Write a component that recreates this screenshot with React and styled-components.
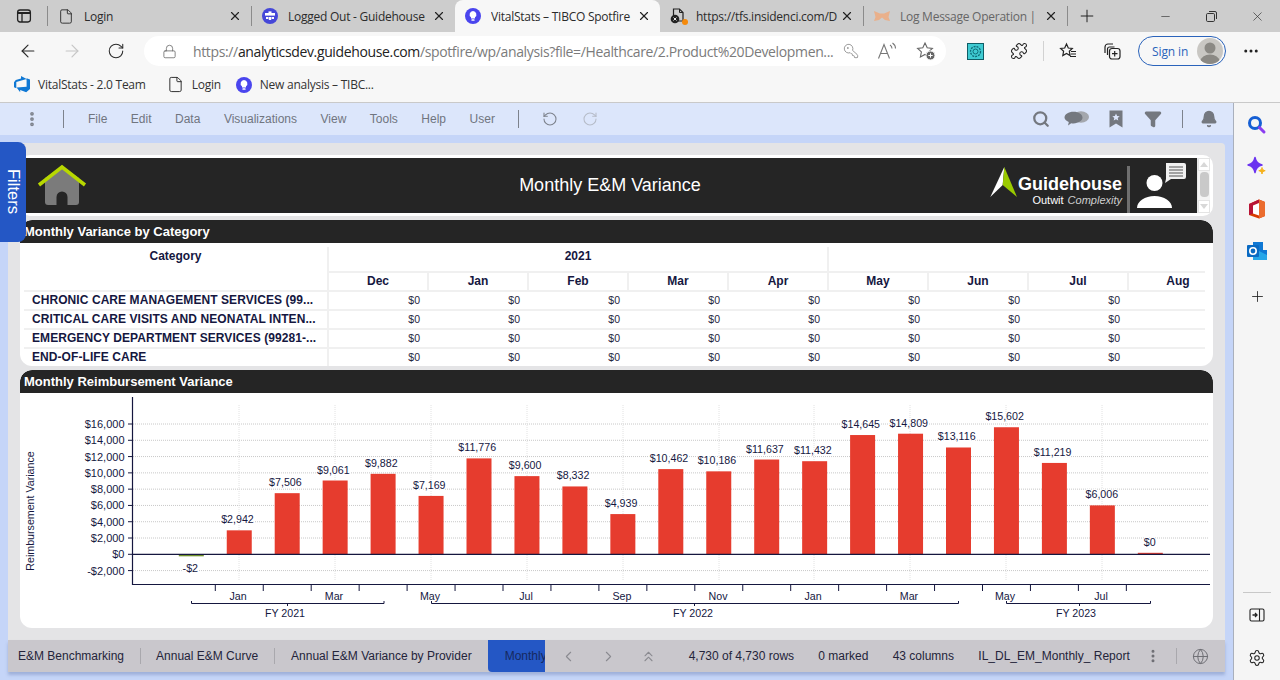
import React from 'react';
import styled, { createGlobalStyle } from 'styled-components';
import { ArrowLeft, ArrowRight, RotateCw, RotateCcw, Lock, KeyRound, Puzzle, Plus, X, Minus, Globe, ChevronLeft, ChevronRight, ChevronsUp, Settings, Search, Filter, Bell, EllipsisVertical, Ellipsis, File } from 'lucide-react';

const Global = createGlobalStyle`
  html, body { margin: 0; padding: 0; width: 1280px; height: 680px; overflow: hidden; background: #f7f7f7; }
  * { box-sizing: border-box; }
`;

const UI = `"Open Sans", "Noto Sans", sans-serif`;
const AR = `"Liberation Sans", Arial, sans-serif`;

const Page = styled.div`
  width: 1280px; height: 680px; display: flex; flex-direction: column; font-family: ${UI}; color: #333; overflow: hidden;
`;

/* ---------- tab strip ---------- */
const TabStrip = styled.div`
  height: 32px; flex: none; background: #cdcdcd; display: flex; align-items: stretch;
`;
const TabMenuBtn = styled.div`
  width: 47px; display: flex; align-items: center; justify-content: center; padding-left: 1px;
`;
const TabSep = styled.div`
  width: 1px; height: 20px; align-self: center; background: #8b8b8b; flex: none;
`;
const Tab = styled.div`
  width: ${p => p.$w}px; flex: none; display: flex; align-items: center; padding-left: 10px; padding-right: 8px;
  background: ${p => p.$active ? '#f7f7f7' : 'transparent'};
  border-radius: ${p => p.$active ? '8px 8px 0 0' : '0'};
`;
const TabIcon = styled.span`
  width: 16px; height: 16px; flex: none; display: flex; align-items: center; justify-content: center; position: relative;
`;
const TabLabel = styled.span`
  flex: 1; margin-left: 10px; font-size: 12px; white-space: nowrap; overflow: hidden; color: ${p => p.$dim ? '#666' : '#2b2b2b'};
  letter-spacing: -0.25px;
`;
const TabClose = styled.span`
  width: 16px; flex: none; display: flex; align-items: center; justify-content: center; color: #222;
`;
const NewTab = styled.div`
  width: 38px; display: flex; align-items: center; justify-content: center; color: #222;
`;
const WinControls = styled.div`
  margin-left: auto; display: flex; align-items: center; color: #333;
`;
const WinBtn = styled.div`
  width: 46px; display: flex; align-items: center; justify-content: center;
`;
const OrangeDot = styled.span`
  position: absolute; right: -2px; bottom: -1px; width: 6px; height: 6px; border-radius: 50%; background: #f58a0b;
`;

/* ---------- address bar ---------- */
const Toolbar = styled.div`
  height: 36px; flex: none; display: flex; align-items: flex-end; padding: 0 0 2px 16px; background: #f7f7f7;
`;
const NavBtn = styled.div`
  width: 24px; height: 30px; margin-right: 20px; display: flex; align-items: center; justify-content: center; color: ${p => p.$off ? '#c6c6c6' : '#2b2b2b'};
`;
const Omnibox = styled.div`
  width: 802px; height: 30px; margin-left: -4px; background: #fff; border-radius: 15px; display: flex; align-items: center; padding-left: 18px; color: #5f5f5f;
`;
const UrlText = styled.span`
  margin-left: 16px; width: 645px; font-size: 14px; white-space: nowrap; color: #7b7b7b; letter-spacing: -0.36px;
  b { font-weight: 400; color: #222; }
`;
const OmniTools = styled.div`
  margin-left: 5px; display: flex; align-items: center; gap: 18px; color: #777;
`;
const ToolIcons = styled.div`
  display: flex; height: 30px; align-items: center; margin-left: 19px; color: #222;
`;
const ToolBtn = styled.div`
  width: ${p => p.$w ?? 44}px; margin-left: ${p => p.$ml ?? 0}px; display: flex; justify-content: center; align-items: center;
`;
const ToolSep = styled.div`
  width: 1px; height: 20px; background: #d2d2d2;
`;
const SignIn = styled.div`
  width: 88px; height: 30px; margin-left: 6px; border: 1.5px solid #2a63bb; border-radius: 15px; display: flex; align-items: center; justify-content: space-between; padding: 0 2px 0 13px; color: #2a63bb; font-size: 12px; letter-spacing: -0.1px;
`;
const Avatar = styled.span`
  width: 26px; height: 26px; border-radius: 50%; background: #c9c7c3; overflow: hidden; display: flex;
`;
const MoreBtn = styled.div`
  width: 50px; height: 30px; display: flex; align-items: center; justify-content: center; color: #222;
`;

/* ---------- bookmarks ---------- */
const Bookmarks = styled.div`
  height: 35px; flex: none; display: flex; align-items: center; padding: 0 0 1px 14px; background: #f7f7f7; border-bottom: 1px solid #c9c9c9;
`;
const Bookmark = styled.div`
  display: flex; align-items: center; gap: 8px; margin-right: ${p => p.$mr}px; font-size: 12px; color: #333; white-space: nowrap; letter-spacing: -0.25px;
`;

/* ---------- app area ---------- */
const Body = styled.div`
  flex: 1; display: flex; min-height: 0;
`;
const Main = styled.div`
  flex: 1; min-width: 0; display: flex; flex-direction: column; background: #c5d5f8; border-right: 1px solid #a9b0bd;
`;
const MenuBar = styled.div`
  height: 32px; flex: none; background: #dce6fb; display: flex; align-items: center; color: #70757f; font-family: ${AR}; font-size: 12px;
`;
const Kebab = styled.div`
  width: 64px; display: flex; align-items: center; justify-content: center; border-right: 1px solid #7d828c; height: 18px; color: #7d828c;
`;
const MenuItems = styled.div`
  display: flex; gap: 23.5px; margin-left: 24px; width: 431px; height: 18px; align-items: center; border-right: 1px solid #7d828c;
`;
const UndoGroup = styled.div`
  display: flex; gap: 24px; margin-left: 23px;
`;
const RightTools = styled.div`
  margin-left: auto; display: flex; align-items: center; padding-right: 15px; color: #74787f;
`;
const RightTool = styled.span`
  width: ${p => p.$w}px; flex: none; display: flex; justify-content: center; align-items: center;
`;
const RightSep = styled.span`
  width: 1px; height: 18px; background: #7d828c; margin: 0 17px 0 5px;
`;
const Workspace = styled.div`
  flex: 1; min-height: 0; margin: 8px 8px 0; display: flex; flex-direction: column; position: relative; font-family: ${AR};
`;
const Panel = styled.div`
  flex: 1; background: #e4e4e6; border-radius: 4px 4px 0 0; padding: 12px 12px 12px; display: flex; flex-direction: column; gap: 4px; min-height: 0;
`;
const FiltersTab = styled.div`
  position: absolute; left: -8px; top: -1px; width: 26px; height: 100px; background: #2457c5; color: #fff; border-radius: 0 8px 8px 0;
  display: flex; align-items: center; justify-content: center; font-size: 16.5px; writing-mode: vertical-rl; padding-bottom: 2px;
`;
const BannerCard = styled.div`
  height: 61px; flex: none; background: #fff; border-radius: 10px; padding: 3px; display: flex;
`;
const Banner = styled.div`
  flex: 1; background: #252525; display: grid; grid-template-columns: 1fr auto 1fr; align-items: center;
`;
const HomeIcon = styled.svg`
  margin-left: 14px; display: block;
`;
const BannerTitle = styled.div`
  color: #fff; font-size: 18px;
`;
const BrandArea = styled.div`
  display: flex; justify-content: flex-end; align-items: stretch; height: 100%;
`;
const BrandMark = styled.svg`
  align-self: flex-start; margin-top: 9px; flex: none;
`;
const BrandText = styled.div`
  display: flex; flex-direction: column; align-items: flex-end; justify-content: center; color: #fff; padding-top: 9px;
`;
const BrandName = styled.div`
  font-size: 18px; font-weight: 700; line-height: 20px;
`;
const BrandTag = styled.div`
  font-size: 11px; line-height: 13px; i { color: #cfcfcf; margin-left: 4px; }
`;
const BrandDivider = styled.div`
  width: 3px; background: #6f6f6f; align-self: flex-end; height: 47px; margin: 0 0 0 5px;
`;
const ScrollTrack = styled.div`
  width: 13px; flex: none; background: #f4f4f4; display: flex; flex-direction: column; align-items: center; border-left: 1px solid #e8e8e8;
`;
const ScrollBtn = styled.div`
  height: 13px; width: 100%; display: flex; align-items: center; justify-content: center; background: #fff; border: 1px solid #e4e4e4;
`;
const ScrollThumb = styled.div`
  width: 9px; height: 25px; margin-top: 1px; border-radius: 4px; background: #c9c9c9;
`;
const ScrollFill = styled.div`
  flex: 1;
`;
const Arrow = styled.span`
  width: 0; height: 0; border-left: 4px solid transparent; border-right: 4px solid transparent;
  ${p => p.$down ? 'border-top: 5px solid #d8d8d8;' : 'border-bottom: 5px solid #d8d8d8;'}
`;

const Card = styled.div`
  background: #fff; border-radius: 12px; height: ${p => p.$h}px; flex: none; display: flex; flex-direction: column; overflow: hidden;
`;
const CardHead = styled.div`
  height: 23px; flex: none; background: #252525; color: #fff; font-weight: 700; font-size: 13px; padding-left: 4px; display: flex; align-items: center; border-radius: 12px 12px 0 0;
`;

const VTable = styled.div`
  margin: 4px 0 0 4px; display: grid; grid-template-columns: 303px repeat(8, 100px) 78px; grid-template-rows: 24px repeat(5, 19px); color: #15173f;
`;
const CornerCell = styled.div`
  grid-row: span 2; text-align: center; font-weight: 700; font-size: 12px; padding-top: 2px;
`;
const YearCell = styled.div`
  grid-column: span ${p => p.$span}; border-left: 2px solid #f0f0f0; text-align: center; font-weight: 700; font-size: 12px; padding-top: 2px;
`;
const MonthCell = styled.div`
  border-left: 2px solid #f0f0f0; border-top: 2px solid #f0f0f0; text-align: center; font-weight: 700; font-size: 12px; line-height: 16px; padding-left: ${p => p.$clip ? 22 : 0}px;
`;
const CatCell = styled.div`
  border-top: 2px solid #f0f0f0; padding-left: 8px; font-weight: 700; font-size: 12px; letter-spacing: 0.07px; line-height: 16px; white-space: nowrap; overflow: hidden;
`;
const ValCell = styled.div`
  border-top: 2px solid #f0f0f0; border-left: ${p => p.$first ? '2px solid #f0f0f0' : 0}; text-align: right; padding-right: 7px; font-size: 10.5px; line-height: 16px; color: #25263e;
`;

const ChartSvg = styled.svg`
  display: block; flex: none; font-family: ${AR}; font-size: 10.67px;
`;
const ChartText = styled.text`
  fill: #15173f; paint-order: stroke; stroke: #fff; stroke-width: ${p => p.$halo ? 2 : 0}px; font-size: ${p => p.$size ?? 10.67}px;
`;

/* ---------- status bar ---------- */
const StatusBar = styled.div`
  height: 32px; flex: none; background: #c9c7cc; display: flex; align-items: center; font-size: 12px; color: #24243a; box-shadow: 0 3px 3px rgba(110, 130, 180, .45); z-index: 1;
`;
const SheetTab = styled.div`
  height: 100%; display: flex; align-items: center; white-space: nowrap; padding: 0 ${p => p.$pr}px 0 ${p => p.$pl}px;
`;
const SheetSep = styled.span`
  width: 1px; height: 16px; background: #a9a8ad; flex: none;
`;
const ActiveSheet = styled.div`
  height: 100%; width: 57px; margin-left: 16px; background: #2457c5; color: #16295f; display: flex; align-items: center; padding-left: 17px; white-space: nowrap; overflow: hidden; border-radius: 0 0 0 4px;
`;
const StatusNav = styled.div`
  width: ${p => p.$w ?? 40}px; display: flex; justify-content: center; color: #8a8a90;
`;
const StatusInfo = styled.div`
  display: flex; gap: 24.3px; margin-left: 17px; white-space: nowrap;
`;
const StatusEnd = styled.div`
  margin-left: auto; display: flex; align-items: center; color: #6e6e74; padding-right: 16px;
`;
const StatusSep = styled.span`
  width: 1px; height: 16px; background: #a9a8ad; margin: 0 15px;
`;
const BottomStrip = styled.div`
  height: 8px; flex: none;
`;

/* ---------- edge sidebar ---------- */
const EdgeBar = styled.div`
  width: 46px; flex: none; background: #f5f5f5; display: flex; flex-direction: column; align-items: center; color: #222; padding-bottom: 2px;
`;
const EdgeBtn = styled.div`
  height: ${p => p.$h ?? 42}px; display: flex; align-items: center; justify-content: center; width: 100%;
`;
const EdgeRule = styled.div`
  width: 28px; height: 1px; background: #c8c8c8; margin-top: auto;
`;

/* ---------- drawn icons ---------- */
const SidePaneIcon = () => (
  <svg width="16" height="16" viewBox="0 0 16 16" fill="none" stroke="#222" strokeWidth="1.3">
    <rect x="1.6" y="2" width="12.8" height="12" rx="2.4" />
    <path d="M2 5h12" strokeWidth="2" />
    <path d="M6 5v9" />
  </svg>
);
const Bulb = ({ s = 16 }) => (
  <svg width={s} height={s} viewBox="0 0 16 16">
    <circle cx="8" cy="8" r="8" fill="#4a45ee" />
    <path d="M8 3a3.5 3.5 0 0 0-2 6.3V10.6h4V9.3A3.5 3.5 0 0 0 8 3z" fill="#fff" />
    <rect x="6.4" y="11.3" width="3.2" height="1.5" rx=".6" fill="#fff" />
  </svg>
);
const LoggedIcon = () => (
  <svg width="16" height="16" viewBox="0 0 16 16">
    <circle cx="8" cy="8" r="8" fill="#4547d8" />
    <rect x="3" y="5" width="10" height="2.6" fill="#fff" />
    <rect x="6.5" y="3.4" width="3" height="1.6" fill="#fff" />
    <rect x="4" y="9" width="2.4" height="2" fill="#fff" />
    <rect x="9.6" y="9" width="2.4" height="2" fill="#fff" />
    <rect x="6.8" y="9" width="2.4" height="3" fill="#fff" />
  </svg>
);
const TfsIcon = () => (
  <svg width="16" height="16" viewBox="0 0 16 16">
    <path d="M3.5 1h6L13 4.5V13H3.5z" fill="none" stroke="#222" strokeWidth="1.2" />
    <path d="M9.5 1v3.5H13" fill="none" stroke="#222" strokeWidth="1" />
    <circle cx="5" cy="11" r="4.3" fill="#222" />
    <path d="M3.5 9.5l3 3m0-3l-3 3" stroke="#fff" strokeWidth=".9" />
  </svg>
);
const MothIcon = () => (
  <svg width="16" height="16" viewBox="0 0 16 16" fill="#e9b08b">
    <path d="M0 3l6 2.5h4L16 3l-1.5 6L16 13l-5-1-3-2.5L5 12l-5 1 1.5-4z" />
  </svg>
);
const ReadAloud = () => (
  <svg width="21" height="18" viewBox="0 0 21 18" fill="none" stroke="#777" strokeWidth="1.1">
    <path d="M1.5 16.5L7 2.5l5.5 14M3.4 11.5h7.2" />
    <path d="M13 3c1.5 1 2 2.2 2 3.5M15.5 1c2 1.4 3 3.3 3 5.5" />
  </svg>
);
const StarPlus = () => (
  <svg width="20" height="20" viewBox="0 0 20 20" fill="none">
    <path d="M9 2l2.2 4.8 5.2.6-3.800 3.500 1 5.100L9 13.400 4.400 16l1-5.100L1.600 7.400l5.200-.6z" stroke="#666" strokeWidth="1.1" />
    <circle cx="14.5" cy="14.5" r="4.5" fill="#666" stroke="#f7f7f7" />
    <path d="M14.5 12.300v4.400M12.300 14.500h4.400" stroke="#fff" />
  </svg>
);
const ExtTile = () => (
  <svg width="17" height="17" viewBox="0 0 17 17">
    <rect x=".5" y=".5" width="16" height="16" fill="#3fcbd2" stroke="#0f5d66" />
    <circle cx="8.5" cy="8.5" r="5" fill="none" stroke="#0f6a78" strokeWidth="1.3" strokeDasharray="2 1" />
    <circle cx="8.5" cy="8.5" r="2.5" fill="none" stroke="#0f6a78" />
  </svg>
);
const FavList = () => (
  <svg width="18" height="18" viewBox="0 0 18 18" fill="none" stroke="#222" strokeWidth="1.2">
    <path d="M7.500 2l1.800 4 4 .5-3 2.800.8 4.200-3.600-2.100-3.700 2.100.8-4.200-3-2.800 4.100-.5z" />
    <path d="M12 9.500h5M12 12h5M11 14.500h6" />
  </svg>
);
const Collections = () => (
  <svg width="18" height="18" viewBox="0 0 18 18" fill="none" stroke="#222" strokeWidth="1.2">
    <path d="M2 11V5a3 3 0 0 1 3-3h5" />
    <path d="M4.500 13V7a2 2 0 0 1 2-2h5" />
    <rect x="6.500" y="6.500" width="10.500" height="10.500" rx="2.500" fill="#f7f7f7" />
    <path d="M11.700 9v5.500M9 11.700h5.500" />
  </svg>
);
const AvatarGlyph = () => (
  <svg width="26" height="26" viewBox="0 0 26 26">
    <circle cx="13" cy="10" r="5.500" fill="#8b8984" />
    <ellipse cx="13" cy="23" rx="9.500" ry="6.500" fill="#8b8984" />
  </svg>
);
const AdoIcon = () => (
  <svg width="16" height="17" viewBox="0 0 16 17" fill="#0f78d4">
    <path d="M16 3.500V13l-3.800 3.200-6-2.200v2.200L2.600 11.500l10-.8V2.300zM12.600 2.900L7 0v2.400L1.800 3.900 0 6.200v5l2.300 1V6z" />
  </svg>
);
const Comments = () => (
  <svg width="26" height="18" viewBox="0 0 26 18" fill="#74787f">
    <ellipse cx="17" cy="7" rx="8" ry="5.800" fill="#a4a7ad" />
    <path d="M9.500 1.800c5 0 9 2.600 9 5.800s-4 5.800-9 5.800c-.8 0-1.600 0-2.300-.2L4 15.500l.8-3.400C2.200 11 .5 9.400.5 7.600c0-3.200 4-5.800 9-5.800z" />
  </svg>
);
const BookmarkStar = () => (
  <svg width="14" height="18" viewBox="0 0 14 18">
    <path d="M.5.500h13V17.500L7 13.500l-6.500 4z" fill="#74787f" />
    <path d="M7 3.500l1.100 2.500 2.600.2-2 1.800.6 2.600L7 9.200l-2.300 1.400.6-2.600-2-1.800 2.600-.2z" fill="#dce6fb" />
  </svg>
);
const EdgeSearch = () => (
  <svg width="20" height="20" viewBox="0 0 20 20" fill="none">
    <circle cx="8" cy="8" r="5.500" stroke="#155fd4" strokeWidth="3" />
    <path d="M12.500 12.500l4.500 4.500" stroke="#8b3df0" strokeWidth="3" strokeLinecap="round" />
  </svg>
);
const EdgeCopilot = () => (
  <svg width="22" height="22" viewBox="0 0 22 22">
    <path d="M9 1.500c.8 4.500 2.800 6.600 7 7.500-4.200.9-6.200 3-7 7.500-.8-4.500-2.800-6.600-7-7.500 4.200-.9 6.200-3 7-7.500z" fill="#6b33f0" stroke="#6b33f0" strokeWidth="1.500" strokeLinejoin="round" />
    <path d="M16 11.500c.3 2 1.200 2.800 3.200 3.200-2 .4-2.900 1.300-3.200 3.300-.3-2-1.200-2.900-3.200-3.300 2-.4 2.900-1.200 3.200-3.200z" fill="#f6b21a" stroke="#f6b21a" strokeLinejoin="round" />
  </svg>
);
const EdgeOffice = () => (
  <svg width="18" height="20" viewBox="0 0 18 20">
    <path d="M11 .5L17 3v14l-6 2.500L1 16V5z" fill="#d83b01" />
    <path d="M11 .5L17 3v14l-6 2.500z" fill="#eb6c2e" />
    <path d="M1 5l10-4.500V4L5 6.500v8l-4 1.500z" fill="#b81437" />
    <path d="M5 6.500L11 4v12.500l-6-2z" fill="#fff" />
  </svg>
);
const EdgeOutlook = () => (
  <svg width="20" height="20" viewBox="0 0 20 20">
    <rect x="6" y="1" width="10" height="9" fill="#0f78d4" />
    <path d="M6 9h14v10H6z" fill="#26a6e8" />
    <path d="M10 9l10 5v-5z" fill="#0f78d4" />
    <rect x="0" y="4" width="12" height="12" rx="1" fill="#0a6ac2" />
    <circle cx="6" cy="10" r="3.200" fill="none" stroke="#fff" strokeWidth="1.600" />
  </svg>
);
const SplitIcon = () => (
  <svg width="16" height="16" viewBox="0 0 16 16" fill="none" stroke="#222" strokeWidth="1.1">
    <rect x="1" y="2" width="14" height="12" rx="1.500" />
    <path d="M10.500 2v12" />
    <path d="M3.500 8h4M6 6l2 2-2 2" strokeWidth="1.300" />
  </svg>
);

const months = ['Dec', 'Jan', 'Feb', 'Mar', 'Apr', 'May', 'Jun', 'Jul', 'Aug'];
const categories = [
  'CHRONIC CARE MANAGEMENT SERVICES (99...',
  'CRITICAL CARE VISITS AND NEONATAL INTEN...',
  'EMERGENCY DEPARTMENT SERVICES (99281-...',
  'END-OF-LIFE CARE',
];

const values = [-2, 2942, 7506, 9061, 9882, 7169, 11776, 9600, 8332, 4939, 10462, 10186, 11637, 11432, 14645, 14809, 13116, 15602, 11219, 6006, 0];
const fmt = v => (v < 0 ? '-$' : '$') + Math.abs(v).toLocaleString('en-US');

// chart coordinates are in page pixels, shifted by the chart's origin
const OX = 20, OY = 393;
const X0 = 191.3, STEP = 47.95, ZERO = 554.3, SCALE = 130.3 / 16000;
const ticksY = [16000, 14000, 12000, 10000, 8000, 6000, 4000, 2000, 0, -2000];
const axisMonths = [['Jan', 238], ['Mar', 334], ['May', 430], ['Jul', 526], ['Sep', 622], ['Nov', 718], ['Jan', 813], ['Mar', 909], ['May', 1005], ['Jul', 1101]];
const years = [['FY 2021', 191.5, 384, 287, 285], ['FY 2022', 431.5, 958.5, 694, 693], ['FY 2023', 1006.5, 1150.5, 1079, 1076]];
const labelShift = i => (i === 0 ? -1 : i >= 19 ? -0.5 : -1.8);

const Chart = () => (
  <ChartSvg width="1193" height="235" viewBox={`${OX} ${OY} 1193 235`}>
    {ticksY.map(t => {
      const y = ZERO - t * SCALE;
      return (
        <g key={t}>
          {t !== 0 && <line x1="133" x2="1208" y1={y} y2={y} stroke="#c8c8c8" strokeDasharray="1 1" />}
          <line x1="128" x2="132" y1={y} y2={y} stroke="#15173f" />
          <ChartText x="124.500" y={y + 4} textAnchor="end" $size={11}>{fmt(t)}</ChartText>
        </g>
      );
    })}
    {axisMonths.map(([, x], i) => (
      <line key={i} x1={x + 1} x2={x + 1} y1="405" y2="580" stroke="#e2e2e2" strokeDasharray="1 1" />
    ))}
    {values.map((v, i) => {
      const cx = X0 + i * STEP;
      const h = Math.abs(v) * SCALE;
      if (v < 0) return <rect key={i} x={cx - 12.5} y={ZERO + 0.5} width="25" height="1.500" fill="#6f8f2a" />;
      if (v === 0) return <rect key={i} x={cx - 12.5} y={ZERO - 1.5} width="25" height="1.500" fill="#e63c2e" />;
      return <rect key={i} x={cx - 12.5} y={ZERO - h} width="25" height={h} fill="#e63c2e" />;
    })}
    <line x1="132" x2="1210" y1={ZERO} y2={ZERO} stroke="#15173f" strokeWidth="1.200" />
    <line x1="132.500" x2="132.500" y1="397" y2="585" stroke="#15173f" strokeWidth="1.200" />
    <line x1="132" x2="1210" y1="584.500" y2="584.500" stroke="#15173f" strokeWidth="1.200" />
    {values.map((v, i) => {
      const cx = X0 + i * STEP;
      const y = v < 0 ? ZERO + 18 : ZERO - Math.abs(v) * SCALE - 7 - (v === 0 ? 1 : 0);
      return <ChartText key={i} $halo x={cx + labelShift(i)} y={y} textAnchor="middle">{fmt(v)}</ChartText>;
    })}
    {Array.from({ length: 20 }, (_, k) => (
      <line key={k} x1={215.3 + k * STEP} x2={215.3 + k * STEP} y1="585" y2="591" stroke="#15173f" />
    ))}
    {axisMonths.map(([m, x], i) => (
      <ChartText key={i} x={x} y="600" textAnchor="middle">{m}</ChartText>
    ))}
    {years.map(([label, a, b, tick, lx]) => (
      <g key={label}>
        <path d={`M${a} 601V603.500H${b}V601M${tick + 0.5} 603.500V606`} fill="none" stroke="#15173f" />
        <ChartText x={lx} y="617" textAnchor="middle">{label}</ChartText>
      </g>
    ))}
    <ChartText transform="translate(33.500 511) rotate(-90)" textAnchor="middle">Reimbursement Variance</ChartText>
  </ChartSvg>
);

export default function App() {
  return (
    <Page>
      <Global />
      <TabStrip>
        <TabMenuBtn><SidePaneIcon /></TabMenuBtn>
        <TabSep />
        <Tab $w={203}><TabIcon><File size={17} strokeWidth={1.3} color="#222" /></TabIcon><TabLabel>Login</TabLabel><TabClose><X size={14} /></TabClose></Tab>
        <TabSep />
        <Tab $w={203}><TabIcon><LoggedIcon /></TabIcon><TabLabel>Logged Out - Guidehouse</TabLabel><TabClose><X size={14} /></TabClose></Tab>
        <Tab $w={205} $active><TabIcon><Bulb /></TabIcon><TabLabel>VitalStats – TIBCO Spotfire</TabLabel><TabClose><X size={14} /></TabClose></Tab>
        <Tab $w={203}><TabIcon><TfsIcon /><OrangeDot /></TabIcon><TabLabel>https://tfs.insidenci.com/D</TabLabel><TabClose><X size={14} /></TabClose></Tab>
        <TabSep />
        <Tab $w={203}><TabIcon><MothIcon /></TabIcon><TabLabel $dim>Log Message Operation |</TabLabel><TabClose><X size={14} /></TabClose></Tab>
        <TabSep />
        <NewTab><Plus size={20} strokeWidth={1.2} /></NewTab>
        <WinControls>
          <WinBtn><Minus size={13} strokeWidth={1.2} /></WinBtn>
          <WinBtn>
            <svg width="11" height="11" viewBox="0 0 11 11" fill="none" stroke="#333"><rect x=".5" y="2.500" width="8" height="8" rx="1.200" /><path d="M3 .5h6a1.500 1.500 0 0 1 1.500 1.500v6" /></svg>
          </WinBtn>
          <WinBtn><X size={15} strokeWidth={1.1} /></WinBtn>
        </WinControls>
      </TabStrip>

      <Toolbar>
        <NavBtn><ArrowLeft size={20} strokeWidth={1.4} /></NavBtn>
        <NavBtn $off><ArrowRight size={20} strokeWidth={1.4} /></NavBtn>
        <NavBtn><RotateCw size={18} strokeWidth={1.4} /></NavBtn>
        <Omnibox>
          <Lock size={15} strokeWidth={1.2} />
          <UrlText>https://<b>analyticsdev.guidehouse.com</b>/spotfire/wp/analysis?file=/Healthcare/2.Product%20Developmen...</UrlText>
          <OmniTools>
            <KeyRound size={16} strokeWidth={1.1} style={{ transform: 'scaleX(-1)' }} />
            <ReadAloud />
            <StarPlus />
          </OmniTools>
        </Omnibox>
        <ToolIcons>
          <ToolBtn $w={20}><ExtTile /></ToolBtn>
          <ToolBtn $w={48} $ml={10}><Puzzle size={18} strokeWidth={1.4} /></ToolBtn>
          <ToolSep />
          <ToolBtn $w={48}><FavList /></ToolBtn>
          <ToolBtn $w={40}><Collections /></ToolBtn>
        </ToolIcons>
        <SignIn>Sign in<Avatar><AvatarGlyph /></Avatar></SignIn>
        <MoreBtn><Ellipsis size={18} /></MoreBtn>
      </Toolbar>

      <Bookmarks>
        <Bookmark $mr={21}><AdoIcon />VitalStats - 2.0 Team</Bookmark>
        <Bookmark $mr={15}><File size={17} strokeWidth={1.3} color="#222" />Login</Bookmark>
        <Bookmark><Bulb />New analysis – TIBC...</Bookmark>
      </Bookmarks>

      <Body>
        <Main>
          <MenuBar>
            <Kebab><EllipsisVertical size={18} strokeWidth={3} /></Kebab>
            <MenuItems>
              <span>File</span><span>Edit</span><span>Data</span><span>Visualizations</span><span>View</span><span>Tools</span><span>Help</span><span>User</span>
            </MenuItems>
            <UndoGroup>
              <RotateCcw size={16} strokeWidth={1.6} color="#7d828c" />
              <RotateCw size={16} strokeWidth={1.6} color="#b6bcc8" />
            </UndoGroup>
            <RightTools>
              <RightTool $w={20}><Search size={18} strokeWidth={3} /></RightTool>
              <RightTool $w={52}><Comments /></RightTool>
              <RightTool $w={26}><BookmarkStar /></RightTool>
              <RightTool $w={48}><Filter size={18} fill="#74787f" /></RightTool>
              <RightSep />
              <RightTool $w={18}><Bell size={18} fill="#74787f" /></RightTool>
            </RightTools>
          </MenuBar>
          <Workspace>
            <Panel>
              <BannerCard>
                <Banner>
                  <HomeIcon width="50" height="44" viewBox="0 0 50 44">
                    <path d="M8 14L25 3l17 11V38a3 3 0 0 1-3 3H11a3 3 0 0 1-3-3z" fill="#7b7b7b" />
                    <path d="M2 21L25 3l23 18" fill="none" stroke="#b8d800" strokeWidth="3.500" />
                    <path d="M19.500 41V33a5.500 5.500 0 0 1 11 0v8z" fill="#252525" />
                  </HomeIcon>
                  <BannerTitle>Monthly E&amp;M Variance</BannerTitle>
                  <BrandArea>
                    <BrandMark width="28" height="31" viewBox="0 0 28 31">
                      <path d="M14.300 0L.3 30 12.700 18z" fill="#fff" />
                      <path d="M14.300 0L27 30 12.700 18z" fill="#9acb00" />
                    </BrandMark>
                    <BrandText>
                      <BrandName>Guidehouse</BrandName>
                      <BrandTag>Outwit<i>Complexity</i></BrandTag>
                    </BrandText>
                    <BrandDivider />
                    <svg width="67" height="55" viewBox="0 0 67 55" fill="#fff">
                      <circle cx="24.500" cy="25" r="8" />
                      <path d="M7 50c0-7 8-12 17.500-12S42 43 42 50z" />
                      <path d="M36 5h18a2 2 0 0 1 2 2v12a2 2 0 0 1-2 2H41l-6 4 1-4z" fill="#f0f0f0" />
                      <path d="M39 9h14M39 12h14M39 15h14M39 18h14" stroke="#555" strokeWidth="1.200" />
                    </svg>
                  </BrandArea>
                </Banner>
                <ScrollTrack>
                  <ScrollBtn><Arrow /></ScrollBtn>
                  <ScrollThumb />
                  <ScrollFill />
                  <ScrollBtn><Arrow $down /></ScrollBtn>
                </ScrollTrack>
              </BannerCard>

              <Card $h={146}>
                <CardHead>Monthly Variance by Category</CardHead>
                <VTable>
                  <CornerCell>Category</CornerCell>
                  <YearCell $span={5}>2021</YearCell>
                  <YearCell $span={4} />
                  {months.map((m, i) => <MonthCell key={m} $clip={i === 8}>{m}</MonthCell>)}
                  {categories.map(c => (
                    <React.Fragment key={c}>
                      <CatCell>{c}</CatCell>
                      {months.map((m, i) => <ValCell key={m} $first={i === 0}>{i < 8 ? '$0' : ''}</ValCell>)}
                    </React.Fragment>
                  ))}
                </VTable>
              </Card>

              <Card $h={258}>
                <CardHead>Monthly Reimbursement Variance</CardHead>
                <Chart />
              </Card>
            </Panel>
            <FiltersTab>Filters</FiltersTab>
            <StatusBar>
              <SheetTab $pl={10} $pr={16}>E&amp;M Benchmarking</SheetTab>
              <SheetSep />
              <SheetTab $pl={15} $pr={16}>Annual E&amp;M Curve</SheetTab>
              <SheetSep />
              <SheetTab $pl={16} $pr={0}>Annual E&amp;M Variance by Provider</SheetTab>
              <ActiveSheet>Monthly E&amp;M Variance</ActiveSheet>
              <StatusNav $w={47}><ChevronLeft size={17} strokeWidth={1.5} /></StatusNav>
              <StatusNav $w={34}><ChevronRight size={17} strokeWidth={1.5} /></StatusNav>
              <StatusNav $w={46}><ChevronsUp size={17} strokeWidth={1.5} /></StatusNav>
              <StatusInfo>
                <span>4,730 of 4,730 rows</span>
                <span>0 marked</span>
                <span>43 columns</span>
                <span>IL_DL_EM_Monthly_ Report</span>
              </StatusInfo>
              <StatusEnd>
                <EllipsisVertical size={16} strokeWidth={2.5} />
                <StatusSep />
                <Globe size={17} strokeWidth={1.4} />
              </StatusEnd>
            </StatusBar>
            <BottomStrip />
          </Workspace>
        </Main>
        <EdgeBar>
          <EdgeBtn $h={43}><EdgeSearch /></EdgeBtn>
          <EdgeBtn><EdgeCopilot /></EdgeBtn>
          <EdgeBtn><EdgeOffice /></EdgeBtn>
          <EdgeBtn><EdgeOutlook /></EdgeBtn>
          <EdgeBtn $h={48}><Plus size={17} strokeWidth={1.2} /></EdgeBtn>
          <EdgeRule />
          <EdgeBtn $h={44}><SplitIcon /></EdgeBtn>
          <EdgeBtn $h={41}><Settings size={18} strokeWidth={1.4} /></EdgeBtn>
        </EdgeBar>
      </Body>
    </Page>
  );
}
